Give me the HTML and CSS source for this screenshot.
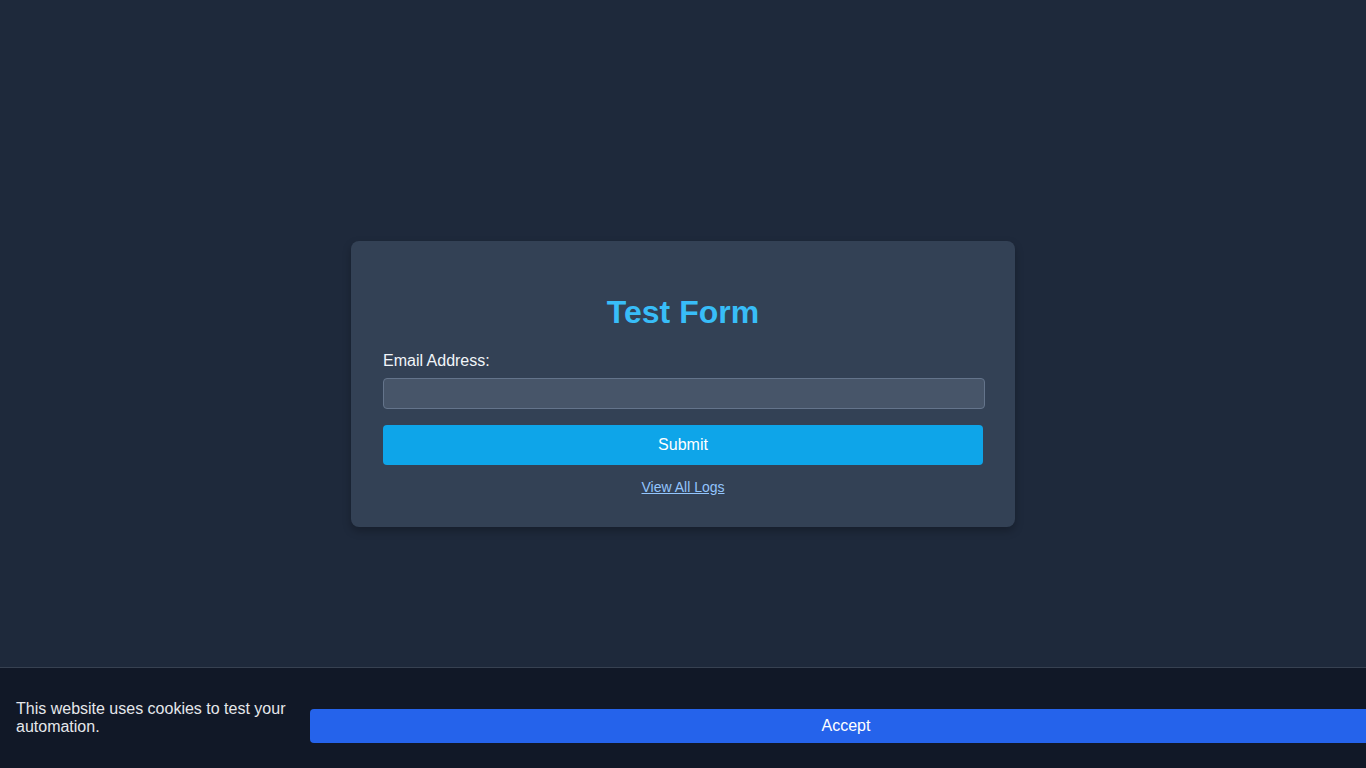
FILE: index.html
```html
<!DOCTYPE html>
<html lang="en">
<head>
<meta charset="utf-8">
<title>Test Form</title>
<link rel="stylesheet" href="styles.css">
</head>
<body>
<main class="page">
  <form class="card">
    <h1 class="title">Test Form</h1>
    <label class="label" for="email">Email Address:</label>
    <input class="input" id="email" type="email">
    <button class="submit" type="button">Submit</button>
    <div class="links"><a class="link" href="#">View All Logs</a></div>
  </form>
</main>
<div class="cookie-banner">
  <p class="cookie-text">This website uses cookies to test your automation.</p>
  <button class="accept" type="button">Accept</button>
</div>
</body>
</html>
```

FILE: styles.css
```css
html, body {
  margin: 0;
  padding: 0;
}
body {
  background: #1e293b;
  font-family: "Liberation Sans", Arial, sans-serif;
  color: #e2e8f0;
}
.page {
  min-height: 100vh;
  display: flex;
  align-items: center;
  justify-content: center;
}
.card {
  width: 600px;
  padding: 32px;
  background: #334155;
  border-radius: 8px;
  box-shadow: 0 4px 8px rgba(0, 0, 0, 0.25);
}
.title {
  margin: 21px 0 21px;
  font-size: 32px;
  font-weight: bold;
  text-align: center;
  color: #38bdf8;
}
.label {
  display: block;
  font-size: 16px;
  color: #f1f5f9;
  margin-bottom: 8px;
}
.input {
  display: block;
  box-sizing: border-box;
  width: 602px;
  height: 31px;
  margin: 0;
  padding: 6px 8px;
  background: #475569;
  border: 1px solid #64748b;
  border-radius: 4px;
  color: #f1f5f9;
  font-family: inherit;
  font-size: 16px;
}
.submit {
  display: block;
  width: 100%;
  height: 40px;
  margin-top: 16px;
  border: none;
  border-radius: 4px;
  background: #0ea5e9;
  color: #ffffff;
  font-family: inherit;
  font-size: 16px;
  cursor: pointer;
}
.links {
  margin-top: 14px;
  text-align: center;
  font-size: 14px;
  line-height: 16px;
}
.link {
  color: #93c5fd;
  text-decoration: underline;
}
.cookie-banner {
  position: fixed;
  left: 0;
  right: 0;
  bottom: 0;
  display: flex;
  align-items: center;
  padding: 16px;
  background: #111827;
  border-top: 1px solid #374151;
  overflow: hidden;
}
.cookie-text {
  flex: none;
  width: 278px;
  margin: 16px 0;
  font-size: 16px;
  color: #e5e7eb;
}
.accept {
  flex: none;
  width: 1072px;
  height: 34px;
  margin: 16px 0 0 16px;
  border: none;
  border-radius: 4px;
  background: #2563eb;
  color: #ffffff;
  font-family: inherit;
  font-size: 16px;
  cursor: pointer;
}
```
